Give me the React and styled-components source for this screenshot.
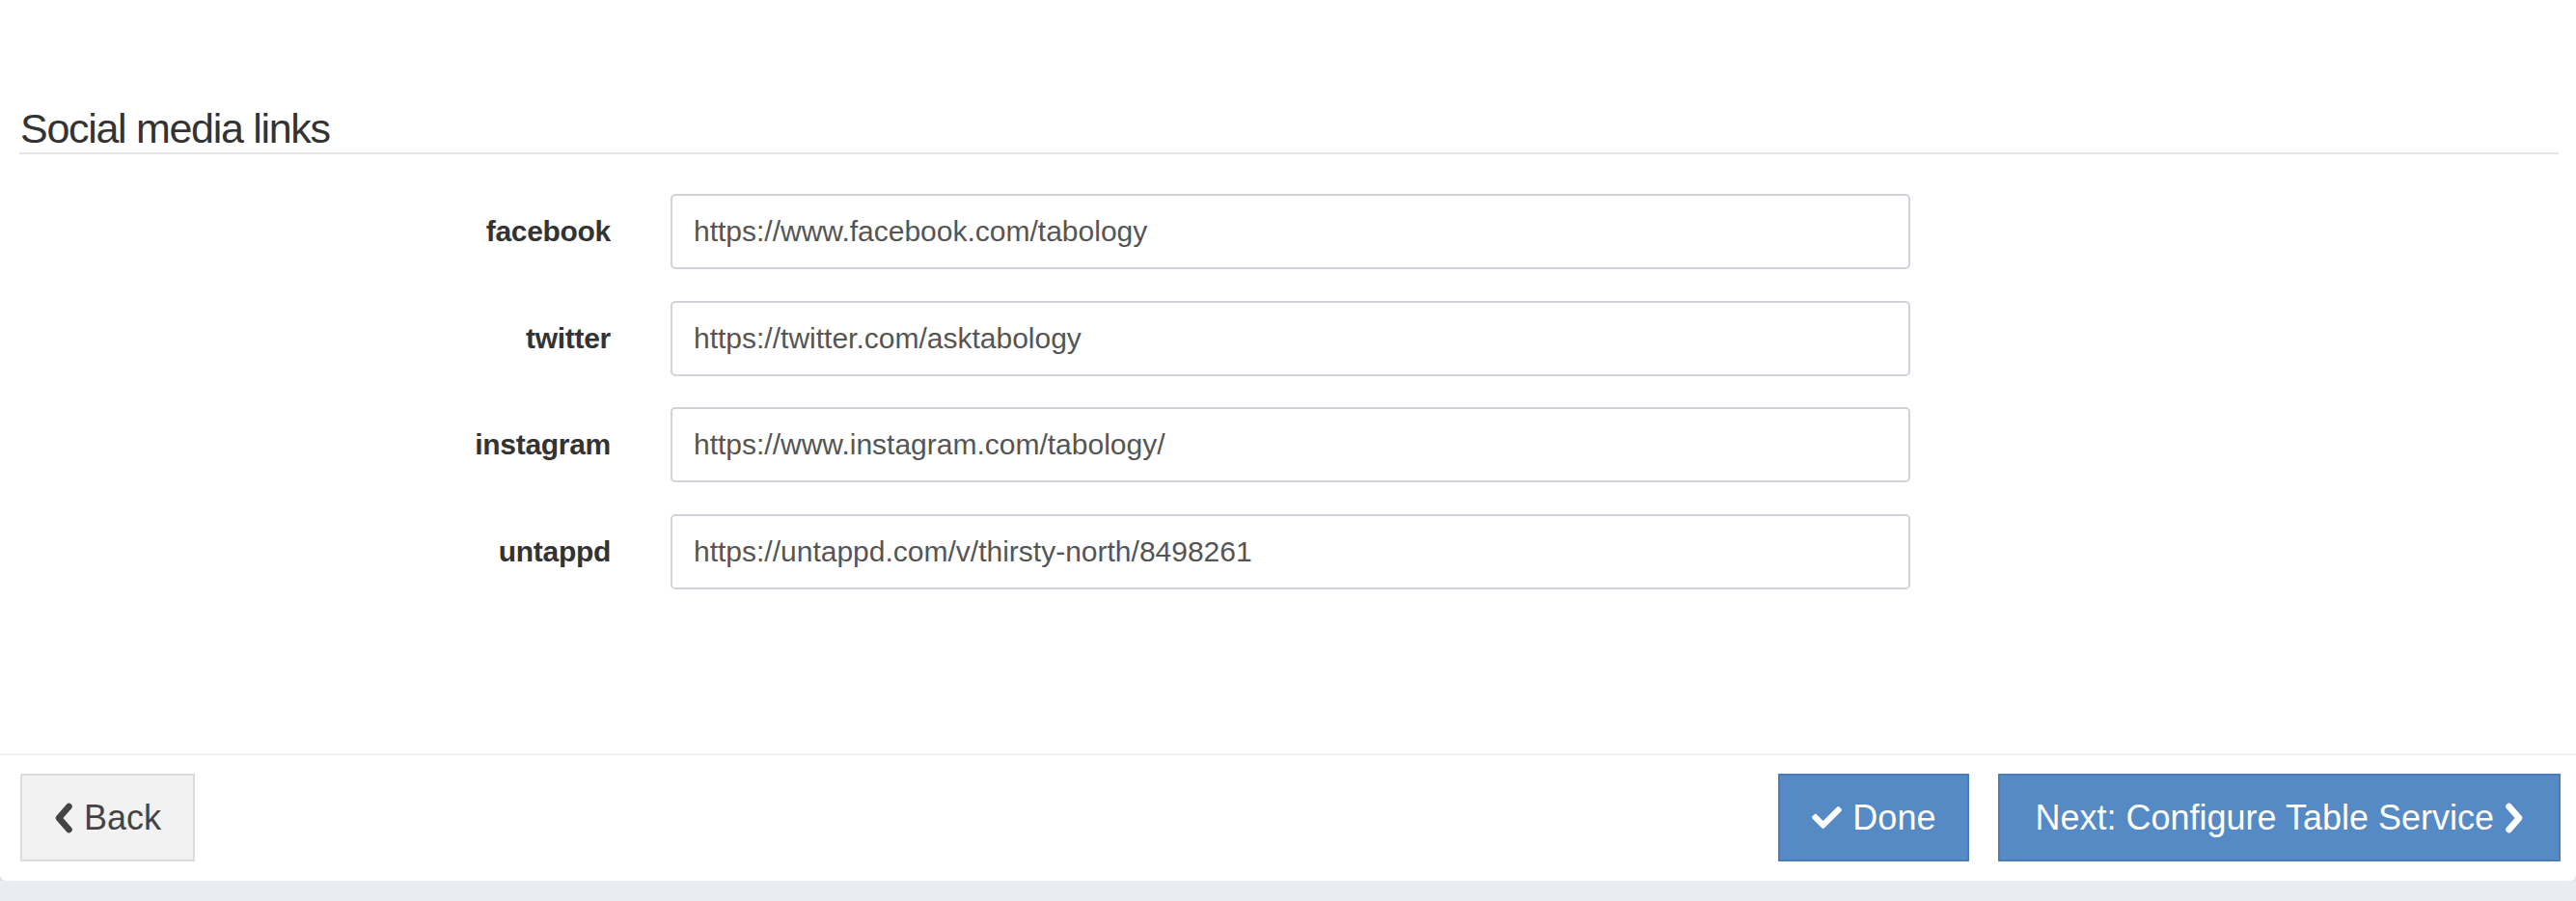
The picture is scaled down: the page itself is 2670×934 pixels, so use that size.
import React from 'react';
import styled, { createGlobalStyle } from 'styled-components';
import { FaCheck } from 'react-icons/fa';

const GlobalStyle = createGlobalStyle`
  html, body {
    margin: 0;
    padding: 0;
    background: #e9ecf1;
    font-family: "Liberation Sans", Arial, Helvetica, sans-serif;
    color: #333;
  }
`;

const links = [
  { name: 'facebook', url: 'https://www.facebook.com/tabology' },
  { name: 'twitter', url: 'https://twitter.com/asktabology' },
  { name: 'instagram', url: 'https://www.instagram.com/tabology/' },
  { name: 'untappd', url: 'https://untappd.com/v/thirsty-north/8498261' },
];

// chevron drawn like the old font-awesome glyph (thick, squared ends)
const Chevron = ({ dir }) => (
  <ChevronSvg viewBox="0 0 20 32">
    <path
      d={dir === 'left' ? 'M15.5 4 L5 16 L15.5 28' : 'M4.5 4 L15 16 L4.5 28'}
      fill="none"
      stroke="currentColor"
      strokeWidth="6.5"
      strokeLinejoin="round"
      strokeLinecap="round"
    />
  </ChevronSvg>
);

const App = () => {
  return (
    <>
      <GlobalStyle />
      <Card>
        <Body>
          <Legend>Social media links</Legend>
          <Form>
            {links.map((link) => (
              <React.Fragment key={link.name}>
                <Label htmlFor={link.name}>{link.name}</Label>
                <Input id={link.name} defaultValue={link.url} />
              </React.Fragment>
            ))}
          </Form>
        </Body>
        <Footer>
          <Button>
            <Chevron dir="left" />
            Back
          </Button>
          <Actions>
            <Button primary>
              <CheckIcon />
              Done
            </Button>
            <Button primary pad="36px">
              Next: Configure Table Service
              <Chevron dir="right" />
            </Button>
          </Actions>
        </Footer>
      </Card>
    </>
  );
};

const ChevronSvg = styled.svg`
  width: 20px;
  height: 32px;
  flex: none;
`;

const CheckIcon = styled(FaCheck)`
  width: 31px;
  height: 31px;
  flex: none;
`;

const Card = styled.div`
  background: #fff;
  border-radius: 0 0 6px 6px;
  box-shadow: 0 2px 3px rgba(0, 0, 0, 0.08);
`;

const Body = styled.div`
  height: 781px;
  box-sizing: border-box;
  padding: 110px 18px 0 20px;
`;

const Legend = styled.div`
  font-size: 43px;
  line-height: 46px;
  letter-spacing: -1.3px;
  color: #333;
  padding-left: 1px;
  padding-bottom: 2px;
  border-bottom: 2px solid #e5e5e5;
`;

const Form = styled.div`
  display: grid;
  grid-template-columns: 613px 1285px;
  column-gap: 62px;
  row-gap: 32.5px;
  margin-top: 41px;
`;

const Label = styled.label`
  justify-self: end;
  align-self: center;
  font-size: 30px;
  font-weight: bold;
  letter-spacing: -0.3px;
  color: #333;
`;

const Input = styled.input`
  height: 78px;
  box-sizing: border-box;
  border: 2px solid #d0d4da;
  border-radius: 5px;
  padding: 0 22px;
  font-family: inherit;
  font-size: 30px;
  color: #555;
  outline: none;
`;

const Footer = styled.div`
  border-top: 2px solid #f2f2f2;
  height: 132px;
  box-sizing: border-box;
  padding: 19px 16px 0 21px;
  display: flex;
  justify-content: space-between;
  align-items: flex-start;
`;

const Actions = styled.div`
  display: flex;
  gap: 30px;
`;

const Button = styled.button`
  display: inline-flex;
  align-items: center;
  gap: 11px;
  height: 91px;
  box-sizing: border-box;
  padding: 0 ${(p) => p.pad || '33px'};
  font-family: inherit;
  font-size: 36px;
  border-radius: 0;
  border: 2px solid ${(p) => (p.primary ? '#4a7db8' : '#dbdbdb')};
  background: ${(p) => (p.primary ? '#558ac5' : '#f2f2f2')};
  color: ${(p) => (p.primary ? '#fff' : '#444')};
  cursor: pointer;
`;

export default App;
